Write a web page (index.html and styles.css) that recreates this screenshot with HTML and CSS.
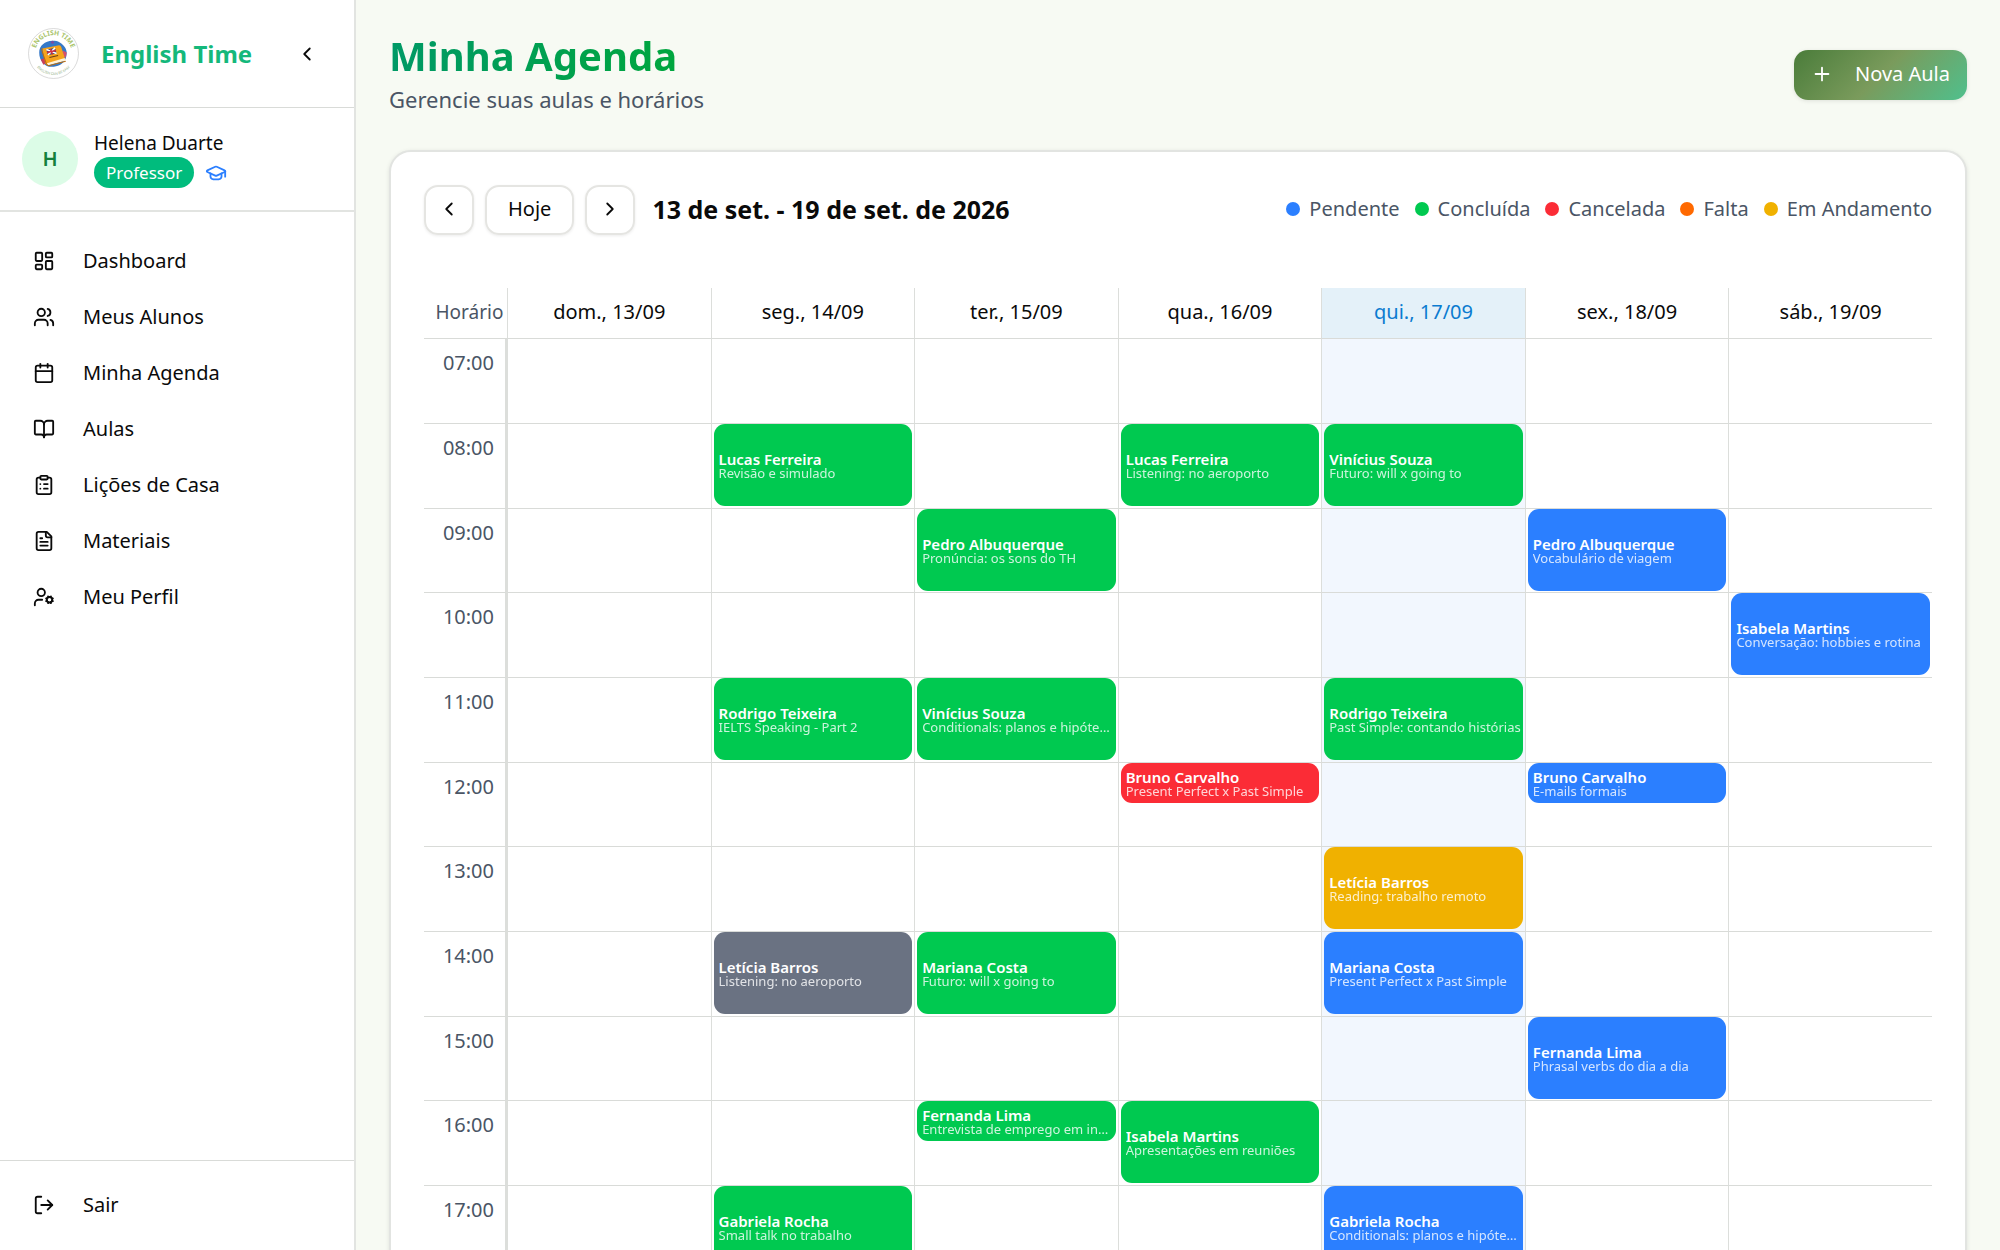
FILE: index.html
```html
<!DOCTYPE html>
<html lang="pt-BR">
<head>
    <meta charset="UTF-8">
    <meta name="viewport" content="width=device-width, initial-scale=1.0">
    <title>Minha Agenda - English Time</title>
    <link rel="stylesheet" href="styles.css">
</head>
<body>
    <div class="app">
        <aside class="sidebar">
            <div class="brand">
                <svg class="logo" viewBox="0 0 100 100" role="img" aria-label="English Time">
                    <defs>
                        <path id="arcTop" d="M14 50a36 36 0 0 1 72 0"/>
                        <path id="arcBottom" d="M8 50a42 42 0 0 0 84 0"/>
                    </defs>
                    <circle cx="50" cy="50" r="49" fill="#fff" stroke="#b5b5b5"/>
                    <text class="logo-top"><textPath href="#arcTop" startOffset="50%">ENGLISH TIME</textPath></text>
                    <text class="logo-bottom"><textPath href="#arcBottom" startOffset="50%">ENGLISH CAN BE EASY</textPath></text>
                    <path d="M22 48c0-13 11-23 26-23 12 0 17 4 22 10 6 7 7 13 5 21-2 9-9 17-20 19-11 3-20 0-25-6-6-6-8-13-8-21z" fill="#3478c8"/>
                    <path d="M25 62l8-3 4 9-7 4z" fill="#c8405a"/>
                    <path d="M68 44l8 4-2 10-6-2z" fill="#d4506a"/>
                    <circle cx="48" cy="28" r="3" fill="#7a4ca0"/>
                    <path d="M28 40l33-6q3 0 4 3l8 25-34 11q-4 0-5-4z" fill="#f5a31c"/>
                    <path d="M37 69l35-10 1 5-34 9z" fill="#fff3d8"/>
                    <path d="M28 40q-2 3 0 7l8 23q2 4 5 4l33-9" fill="none" stroke="#b96c10" stroke-width="2"/>
                    <path d="M36 42l17-3 3 11-17 3z" fill="#28437f"/>
                    <path d="M36 42l20 8M53 39l-14 14" stroke="#fff" stroke-width="3"/>
                    <path d="M44 41l4 11M37 48l18-4" stroke="#d22f3f" stroke-width="3"/>
                    <path d="M42 58l17-4" stroke="#6b3d12" stroke-width="2"/>
                </svg>
                <span class="brand-name">English Time</span>
                <button class="collapse" aria-label="Recolher menu">
                    <svg class="icon" viewBox="0 0 24 24"><path d="m15 18-6-6 6-6"/></svg>
                </button>
            </div>

            <div class="profile">
                <div class="avatar">H</div>
                <div class="profile-info">
                    <span class="profile-name">Helena Duarte</span>
                    <div class="profile-role">
                        <span class="badge">Professor</span>
                        <svg class="icon cap" viewBox="0 0 24 24"><path d="M21.42 10.922a1 1 0 0 0-.019-1.838L12.83 5.18a2 2 0 0 0-1.66 0L2.6 9.08a1 1 0 0 0 0 1.832l8.57 3.908a2 2 0 0 0 1.66 0z"/><path d="M22 10v6"/><path d="M6 12.5V16a6 3 0 0 0 12 0v-3.5"/></svg>
                    </div>
                </div>
            </div>

            <nav class="menu">
                <a href="#">
                    <svg class="icon" viewBox="0 0 24 24"><rect width="7" height="9" x="3" y="3" rx="1"/><rect width="7" height="5" x="14" y="3" rx="1"/><rect width="7" height="9" x="14" y="12" rx="1"/><rect width="7" height="5" x="3" y="16" rx="1"/></svg>
                    Dashboard
                </a>
                <a href="#">
                    <svg class="icon" viewBox="0 0 24 24"><path d="M16 21v-2a4 4 0 0 0-4-4H6a4 4 0 0 0-4 4v2"/><path d="M16 3.128a4 4 0 0 1 0 7.744"/><path d="M22 21v-2a4 4 0 0 0-3-3.87"/><circle cx="9" cy="7" r="4"/></svg>
                    Meus Alunos
                </a>
                <a href="#">
                    <svg class="icon" viewBox="0 0 24 24"><path d="M8 2v4"/><path d="M16 2v4"/><rect width="18" height="18" x="3" y="4" rx="2"/><path d="M3 10h18"/></svg>
                    Minha Agenda
                </a>
                <a href="#">
                    <svg class="icon" viewBox="0 0 24 24"><path d="M12 7v14"/><path d="M3 18a1 1 0 0 1-1-1V4a1 1 0 0 1 1-1h5a4 4 0 0 1 4 4 4 4 0 0 1 4-4h5a1 1 0 0 1 1 1v13a1 1 0 0 1-1 1h-6a3 3 0 0 0-3 3 3 3 0 0 0-3-3z"/></svg>
                    Aulas
                </a>
                <a href="#">
                    <svg class="icon" viewBox="0 0 24 24"><rect width="8" height="4" x="8" y="2" rx="1"/><path d="M16 4h2a2 2 0 0 1 2 2v14a2 2 0 0 1-2 2H6a2 2 0 0 1-2-2V6a2 2 0 0 1 2-2h2"/><path d="M12 11h4"/><path d="M12 16h4"/><path d="M8 11h.01"/><path d="M8 16h.01"/></svg>
                    Lições de Casa
                </a>
                <a href="#">
                    <svg class="icon" viewBox="0 0 24 24"><path d="M15 2H6a2 2 0 0 0-2 2v16a2 2 0 0 0 2 2h12a2 2 0 0 0 2-2V7z"/><path d="M14 2v4a2 2 0 0 0 2 2h4"/><path d="M10 9H8"/><path d="M16 13H8"/><path d="M16 17H8"/></svg>
                    Materiais
                </a>
                <a href="#">
                    <svg class="icon" viewBox="0 0 24 24"><path d="M10 15H6a4 4 0 0 0-4 4v2"/><path d="m14.305 16.53.923-.382"/><path d="m15.228 13.852-.923-.383"/><path d="m16.852 12.228-.383-.923"/><path d="m16.852 17.772-.383.924"/><path d="m19.148 12.228.383-.923"/><path d="m19.53 18.696-.382-.924"/><path d="m20.772 13.852.924-.383"/><path d="m20.772 16.148.924.383"/><circle cx="18" cy="15" r="3"/><circle cx="9" cy="7" r="4"/></svg>
                    Meu Perfil
                </a>
            </nav>

            <div class="logout">
                <button>
                    <svg class="icon" viewBox="0 0 24 24"><path d="m16 17 5-5-5-5"/><path d="M21 12H9"/><path d="M9 21H5a2 2 0 0 1-2-2V5a2 2 0 0 1 2-2h4"/></svg>
                    Sair
                </button>
            </div>
        </aside>

        <main class="content">
            <header class="page-header">
                <div>
                    <h1>Minha Agenda</h1>
                    <p>Gerencie suas aulas e horários</p>
                </div>
                <button class="new-lesson">
                    <svg class="icon" viewBox="0 0 24 24"><path d="M5 12h14"/><path d="M12 5v14"/></svg>
                    Nova Aula
                </button>
            </header>

            <section class="card">
                <div class="toolbar">
                    <div class="week-nav">
                        <button class="square" aria-label="Semana anterior">
                            <svg class="icon" viewBox="0 0 24 24"><path d="m15 18-6-6 6-6"/></svg>
                        </button>
                        <button>Hoje</button>
                        <button class="square" aria-label="Próxima semana">
                            <svg class="icon" viewBox="0 0 24 24"><path d="m9 18 6-6-6-6"/></svg>
                        </button>
                        <h2>13 de set. - 19 de set. de 2026</h2>
                    </div>
                    <ul class="legend">
                        <li><span class="dot pendente"></span>Pendente</li>
                        <li><span class="dot concluida"></span>Concluída</li>
                        <li><span class="dot cancelada"></span>Cancelada</li>
                        <li><span class="dot falta"></span>Falta</li>
                        <li><span class="dot andamento"></span>Em Andamento</li>
                    </ul>
                </div>

                <table class="week">
                    <thead>
                        <tr>
                            <th class="time">Horário</th>
                            <th>dom., 13/09</th>
                            <th>seg., 14/09</th>
                            <th>ter., 15/09</th>
                            <th>qua., 16/09</th>
                            <th class="today">qui., 17/09</th>
                            <th>sex., 18/09</th>
                            <th>sáb., 19/09</th>
                        </tr>
                    </thead>
                    <tbody id="hours"></tbody>
                </table>
            </section>
        </main>
    </div>

    <script>
        const hours = document.getElementById("hours");
        const today = 4;

        // day: 0 = domingo ... 6 = sábado
        const lessons = [
            { day: 1, hour: 8, status: "concluida", student: "Lucas Ferreira", topic: "Revisão e simulado" },
            { day: 3, hour: 8, status: "concluida", student: "Lucas Ferreira", topic: "Listening: no aeroporto" },
            { day: 4, hour: 8, status: "concluida", student: "Vinícius Souza", topic: "Futuro: will x going to" },
            { day: 2, hour: 9, status: "concluida", student: "Pedro Albuquerque", topic: "Pronúncia: os sons do TH" },
            { day: 5, hour: 9, status: "pendente", student: "Pedro Albuquerque", topic: "Vocabulário de viagem" },
            { day: 6, hour: 10, status: "pendente", student: "Isabela Martins", topic: "Conversação: hobbies e rotina" },
            { day: 1, hour: 11, status: "concluida", student: "Rodrigo Teixeira", topic: "IELTS Speaking - Part 2" },
            { day: 2, hour: 11, status: "concluida", student: "Vinícius Souza", topic: "Conditionals: planos e hipóteses" },
            { day: 4, hour: 11, status: "concluida", student: "Rodrigo Teixeira", topic: "Past Simple: contando histórias" },
            { day: 3, hour: 12, half: true, status: "cancelada", student: "Bruno Carvalho", topic: "Present Perfect x Past Simple" },
            { day: 5, hour: 12, half: true, status: "pendente", student: "Bruno Carvalho", topic: "E-mails formais" },
            { day: 4, hour: 13, status: "andamento", student: "Letícia Barros", topic: "Reading: trabalho remoto" },
            { day: 1, hour: 14, status: "outro", student: "Letícia Barros", topic: "Listening: no aeroporto" },
            { day: 2, hour: 14, status: "concluida", student: "Mariana Costa", topic: "Futuro: will x going to" },
            { day: 4, hour: 14, status: "pendente", student: "Mariana Costa", topic: "Present Perfect x Past Simple" },
            { day: 5, hour: 15, status: "pendente", student: "Fernanda Lima", topic: "Phrasal verbs do dia a dia" },
            { day: 2, hour: 16, half: true, status: "concluida", student: "Fernanda Lima", topic: "Entrevista de emprego em inglês" },
            { day: 3, hour: 16, status: "concluida", student: "Isabela Martins", topic: "Apresentações em reuniões" },
            { day: 1, hour: 17, status: "concluida", student: "Gabriela Rocha", topic: "Small talk no trabalho" },
            { day: 4, hour: 17, status: "pendente", student: "Gabriela Rocha", topic: "Conditionals: planos e hipóteses" }
        ];

        function renderLesson(lesson) {
            return `<button class="lesson ${lesson.status}${lesson.half ? " half" : ""}">
                <strong>${lesson.student}</strong>
                <span>${lesson.topic}</span>
            </button>`;
        }

        function renderWeek() {
            let rows = "";

            for (let hour = 7; hour <= 17; hour++) {
                rows += `<tr><th class="time">${String(hour).padStart(2, "0")}:00</th>`;

                for (let day = 0; day < 7; day++) {
                    const lesson = lessons.find(l => l.day === day && l.hour === hour);
                    rows += `<td class="${day === today ? "today" : ""}">${lesson ? renderLesson(lesson) : ""}</td>`;
                }

                rows += "</tr>";
            }

            hours.innerHTML = rows;
        }

        renderWeek();
    </script>
</body>
</html>
```
FILE: styles.css
```css
* {
    box-sizing: border-box;
}

body {
    font-family: "Noto Sans", sans-serif;
    font-size: 20px;
    line-height: 28px;
    color: #0a0a0a;
    background-color: #f7faf3;
    margin: 0;
}

h1, h2, p, ul {
    margin: 0;
    padding: 0;
}

button {
    font: inherit;
    color: inherit;
    background: none;
    border: none;
    padding: 0;
    cursor: pointer;
}

.icon {
    width: 22px;
    height: 22px;
    flex-shrink: 0;
    fill: none;
    stroke: currentColor;
    stroke-width: 2;
    stroke-linecap: round;
    stroke-linejoin: round;
}

.app {
    display: flex;
    height: 100vh;
}

/* Sidebar */
.sidebar {
    display: flex;
    flex-direction: column;
    width: 356px;
    flex-shrink: 0;
    background-color: #fff;
    border-right: 2px solid #e2e4e1;
}

.brand {
    display: flex;
    align-items: center;
    padding: 28px 36px 28px 28px;
    border-bottom: 1px solid #d9dbd8;
}

.logo {
    width: 51px;
    height: 51px;
    flex-shrink: 0;
}

.logo-top,
.logo-bottom {
    font-weight: bold;
    font-size: 13px;
    fill: #a9c46c;
    text-anchor: middle;
}

.logo-bottom {
    font-size: 7px;
    font-weight: normal;
    fill: #8fae84;
}

.brand-name {
    flex: 1;
    margin-left: 22px;
    font-size: 24px;
    font-weight: 700;
    color: #14b87b;
}

.collapse {
    display: flex;
}

.profile {
    display: flex;
    align-items: center;
    gap: 16px;
    padding: 22px;
    border-bottom: 2px solid #e2e4e1;
}

.avatar {
    width: 56px;
    height: 56px;
    border-radius: 50%;
    background-color: #dcfce7;
    color: #15803d;
    font-weight: 600;
    line-height: 56px;
    text-align: center;
}

.profile-name {
    display: block;
    font-size: 19px;
    line-height: 27px;
}

.profile-role {
    display: flex;
    align-items: center;
    gap: 11px;
}

.badge {
    padding: 0 12px;
    border-radius: 16px;
    background-color: #00bc7d;
    color: #fff;
    font-size: 17px;
    line-height: 31px;
}

.cap {
    color: #2b7fff;
}

.menu {
    display: flex;
    flex: 1;
    flex-direction: column;
    padding: 21px 22px;
}

.menu a,
.logout button {
    display: flex;
    align-items: center;
    gap: 28px;
    padding: 14px 11px;
    color: inherit;
    text-decoration: none;
}

.logout {
    padding: 16px 22px 17px;
    border-top: 1px solid #d9dbd8;
}

/* Page */
.content {
    flex: 1;
    min-width: 0;
    padding: 33px;
    overflow-y: auto;
    scrollbar-width: none;
}

.page-header {
    display: flex;
    align-items: center;
    justify-content: space-between;
    margin-bottom: 34px;
}

.page-header h1 {
    width: fit-content;
    padding-bottom: 4px;
    font-size: 40px;
    font-weight: 700;
    line-height: 46px;
    color: transparent;
    background: linear-gradient(to right, #009966, #00a63e);
    background-clip: text;
}

.page-header p {
    font-size: 22px;
    line-height: 33px;
    color: #4a5565;
}

.new-lesson {
    display: flex;
    align-items: center;
    gap: 22px;
    height: 50px;
    padding: 0 17px 1px;
    border-radius: 14px;
    color: #fff;
    background: linear-gradient(135deg, #4a7c3a, #7a9b5c 50%, #4fc08d);
    box-shadow: 0 1px 4px rgba(0, 0, 0, 0.1);
}

.card {
    padding: 33px;
    background-color: #fff;
    border: 2px solid #e2e4e1;
    border-radius: 22px;
    box-shadow: 0 1px 4px rgba(0, 0, 0, 0.1);
}

.toolbar {
    display: flex;
    align-items: center;
    justify-content: space-between;
    margin-bottom: 53px;
}

.week-nav {
    display: flex;
    align-items: center;
    gap: 11px;
}

.week-nav button {
    display: flex;
    align-items: center;
    justify-content: center;
    height: 50px;
    padding: 0 21px 2px;
    border: 2px solid #e5e5e2;
    border-radius: 14px;
    box-shadow: 0 1px 3px rgba(0, 0, 0, 0.08);
}

.week-nav .square {
    width: 50px;
    padding: 0 0 2px;
}

.week-nav h2 {
    margin-left: 6px;
    font-size: 25px;
    font-weight: 700;
}

.week-nav h2,
.legend {
    padding-bottom: 2px;
}

.legend {
    display: flex;
    gap: 15px;
    color: #4a5565;
    list-style: none;
}

.legend li {
    display: flex;
    align-items: center;
    gap: 9px;
}

.dot {
    width: 14px;
    height: 14px;
    border-radius: 50%;
}

/* Week table */
.week {
    width: 100%;
    table-layout: fixed;
    border-collapse: separate;
    border-spacing: 0;
}

.week th {
    padding: 0 0 2px;
    font-weight: normal;
}

.week thead th {
    height: 51px;
    border-bottom: 1px solid #d9dbd8;
}

.week thead th + th,
.week td {
    border-left: 1px solid #dcdedb;
}

.week .time {
    width: 83px;
    color: #4a5565;
}

.week thead .time {
    padding-left: 8px;
    font-size: 19px;
}

.week tbody .time {
    padding: 10px 11px 0 0;
    border-right: 2px solid #dcdedb;
    text-align: right;
    vertical-align: top;
}

.week tbody tr {
    height: 85px;
}

.week tbody tr:nth-child(3n) {
    height: 84px;
}

.week tbody th,
.week td {
    border-bottom: 1px solid #d9dbd8;
}

.week td {
    padding: 0 2px;
    vertical-align: top;
}

.week thead .today {
    background-color: #e4f1f9;
    color: #0b7bd0;
}

.week td.today {
    background-color: #f2f7fe;
}

.lesson {
    display: flex;
    flex-direction: column;
    justify-content: center;
    width: 100%;
    height: 82px;
    padding: 0 1px 0 5px;
    border-radius: 11px;
    color: #fff;
    text-align: left;
}

.lesson.half {
    height: 40px;
}

.lesson strong,
.lesson span {
    overflow: hidden;
    font-size: 15px;
    font-weight: 600;
    line-height: 20px;
    text-overflow: ellipsis;
    white-space: nowrap;
}

.lesson span {
    margin-top: -5px;
    font-size: 13px;
    font-weight: normal;
    line-height: 18px;
    opacity: 0.8;
}

/* Status colors */
.pendente {
    background-color: #2b7fff;
}

.concluida {
    background-color: #00c950;
}

.cancelada {
    background-color: #fb2c36;
}

.falta {
    background-color: #ff6900;
}

.andamento {
    background-color: #f0b100;
}

.outro {
    background-color: #6a7282;
}
```
